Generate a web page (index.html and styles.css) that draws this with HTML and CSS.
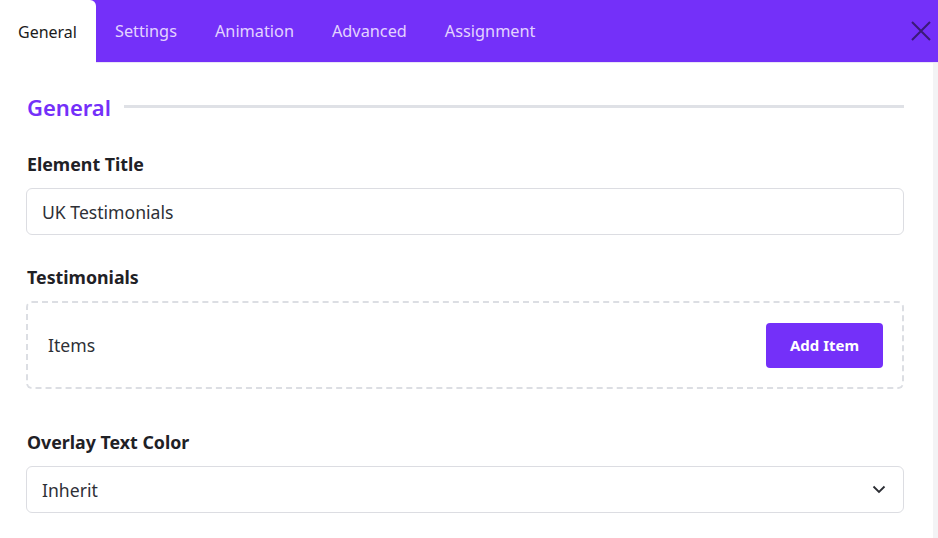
FILE: index.html
```html
<!DOCTYPE html>
<html lang="en">
<head>
    <meta charset="UTF-8">
    <meta name="viewport" content="width=device-width, initial-scale=1.0">
    <title>Element Settings</title>
    <link rel="stylesheet" href="styles.css">
</head>
<body>
    <div class="panel">
        <div class="tabs">
            <div class="tab active">General</div>
            <div class="tab">Settings</div>
            <div class="tab">Animation</div>
            <div class="tab">Advanced</div>
            <div class="tab">Assignment</div>
            <button class="close" aria-label="Close">
                <svg width="22" height="22" viewBox="0 0 22 22">
                    <path d="M2 2 L20 20 M20 2 L2 20" stroke="#3a1a78" stroke-width="2" fill="none"/>
                </svg>
            </button>
        </div>

        <div class="body">
            <div class="content">
                <div class="section-title">
                    <h2>General</h2>
                    <span class="rule"></span>
                </div>

                <div class="field">
                    <label>Element Title</label>
                    <div class="input">UK Testimonials</div>
                </div>

                <div class="field">
                    <label>Testimonials</label>
                    <div class="repeater">
                        <span>Items</span>
                        <button class="add-btn">Add Item</button>
                    </div>
                </div>

                <div class="field spaced">
                    <label>Overlay Text Color</label>
                    <div class="input select">
                        <span>Inherit</span>
                        <svg width="14" height="9" viewBox="0 0 14 9">
                            <path d="M1.5 1.5 L7 7 L12.5 1.5" stroke="#2b2d33" stroke-width="1.8" fill="none"/>
                        </svg>
                    </div>
                </div>
            </div>
            <div class="scrollbar"></div>
        </div>
    </div>
</body>
</html>
```

FILE: styles.css
```css
body {
    margin: 0;
    font-family: "Noto Sans", "Open Sans", sans-serif;
    background-color: #fff;
    color: #1f2126;
}

.panel {
    width: 938px;
    height: 538px;
    overflow: hidden;
}

.tabs {
    display: flex;
    align-items: stretch;
    height: 62px;
    background-color: #7430f9;
    border-bottom: 1px solid #e9e4f7;
}

.tab {
    display: flex;
    align-items: center;
    padding: 0 19px 1px 19px;
    font-size: 16.3px;
    color: #e3d3ff;
}

.tab.active {
    background-color: #fff;
    color: #1b1b1b;
    font-size: 16px;
    border-radius: 0 6px 0 0;
    padding: 0 19px 1px 18px;
    height: 63px;
}

.close {
    margin-left: auto;
    margin-right: 6px;
    background: none;
    border: none;
    padding: 0;
    display: flex;
    align-items: center;
    cursor: pointer;
}

.body {
    display: flex;
    height: 475px;
}

.content {
    flex: 1;
    padding: 26px 29px 0 26px;
}

.scrollbar {
    width: 5px;
    background-color: #f3f3f5;
}

.section-title {
    display: flex;
    align-items: center;
    gap: 13px;
    margin: 0 0 27px 1px;
}

.section-title h2 {
    margin: 0;
    font-size: 22px;
    font-weight: 600;
    color: #7430f9;
    line-height: 36px;
}

.rule {
    flex: 1;
    height: 3px;
    background-color: #dfe1e6;
    margin-top: -1px;
}

.field {
    margin-bottom: 30px;
}

.field.spaced {
    margin-top: 41px;
}

.field label {
    display: block;
    font-size: 17.8px;
    font-weight: 700;
    margin: 0 0 12px 1px;
    line-height: 24px;
}

.input {
    display: flex;
    align-items: center;
    justify-content: space-between;
    height: 45px;
    padding: 0 17px 0 15px;
    border: 1px solid #dcdde2;
    border-radius: 6px;
    font-size: 17.6px;
    color: #2e3036;
}

.repeater {
    display: flex;
    align-items: center;
    justify-content: space-between;
    height: 84px;
    padding: 0 19px 0 20px;
    border: 2px dashed #dcdee3;
    border-radius: 6px;
    font-size: 17.6px;
    color: #2e3036;
}

.add-btn {
    width: 117px;
    height: 45px;
    border: none;
    border-radius: 4px;
    background-color: #7430f9;
    color: #fff;
    font-family: inherit;
    font-size: 15px;
    font-weight: 700;
    cursor: pointer;
}
```
